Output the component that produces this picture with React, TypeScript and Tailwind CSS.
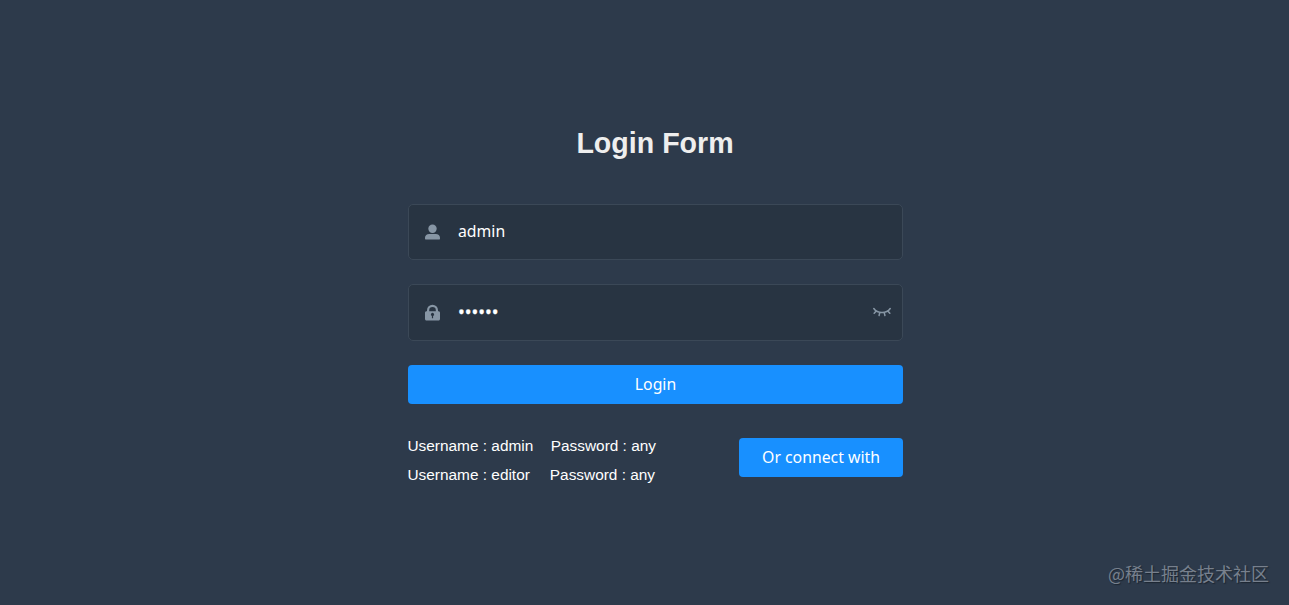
import { useState } from "react";
import clsx from "clsx";

const accounts = [
  { username: "admin", password: "any", gap: "gap-[17.5px]" },
  { username: "editor", password: "any", gap: "gap-[20px]" },
];

function UserIcon() {
  return (
    <svg width="16" height="16" viewBox="0 0 16 16" fill="currentColor">
      <circle cx="7.5" cy="4.8" r="4.2" />
      <path d="M4.2 10h6.6c2.4 0 4.2 1.6 4.2 3.8v.6c0 .8-.6 1.2-1.4 1.2H1.4c-.8 0-1.4-.4-1.4-1.2v-.6C0 11.6 1.8 10 4.2 10z" />
    </svg>
  );
}

function LockIcon() {
  return (
    <svg width="16" height="17" viewBox="0 0 16 17" fill="currentColor">
      <path
        fillRule="evenodd"
        d="M2 7.3V6.2a5.5 5.5 0 0 1 11 0v1.1h.4c1 0 1.6.6 1.6 1.5V15c0 .9-.6 1.5-1.6 1.5H1.6C.6 16.5 0 15.9 0 15V8.8c0-.9.6-1.5 1.6-1.5zm2.2 0h6.6V6.2a3.3 3.3 0 0 0-6.6 0zM6.9 12v2.2h1.2V12a1.6 1.6 0 1 0-1.2 0z"
      />
    </svg>
  );
}

function EyeClosedIcon() {
  return (
    <svg
      width="18"
      height="11"
      viewBox="0 0 18 11"
      fill="none"
      stroke="currentColor"
      strokeWidth="1.5"
      strokeLinecap="round"
    >
      <path d="M.8 1.5C4.6 6.9 13.4 6.9 17.2 1.5M3.2 3.9l-2 2.4M6.8 5.4l-.7 3.1M11.2 5.4l.7 3.1M14.8 3.9l2 2.4" />
    </svg>
  );
}

export default function App() {
  const [username, setUsername] = useState("admin");
  const [password, setPassword] = useState("111111");
  const [visible, setVisible] = useState(false);

  return (
    <div className="relative flex h-[605px] w-full justify-center overflow-hidden bg-[#2d3a4b] pl-[22px] font-['Liberation_Sans',sans-serif]">
      <form className="w-[495px] pt-[127px]" onSubmit={(e) => e.preventDefault()}>
        <h3 className="mb-[44px] pr-px text-center text-[28.6px] leading-[33px] font-bold text-[#eee]">
          Login Form
        </h3>

        <div className="mb-6 flex h-14 items-center rounded-[5px] border border-[#3b4857] bg-[#283442] pr-[11px] pl-4 text-[#8796a5]">
          <UserIcon />
          <input
            className="ml-[17px] h-full min-w-0 flex-1 bg-transparent pb-[2px] font-['Noto_Sans',sans-serif] text-[15.8px] text-white outline-none"
            value={username}
            onChange={(e) => setUsername(e.target.value)}
          />
        </div>

        <div className="mb-6 flex h-[57px] items-center rounded-[5px] border border-[#3b4857] bg-[#283442] pr-[11px] pl-4 text-[#8796a5]">
          <LockIcon />
          <input
            className={clsx(
              "ml-[17px] h-full min-w-0 flex-1 bg-transparent font-['Noto_Sans',sans-serif] text-white outline-none",
              visible ? "pb-[2px] text-[15.8px]" : "pb-1 text-[18px] [-webkit-text-stroke:0.3px_white]"
            )}
            type={visible ? "text" : "password"}
            value={password}
            onChange={(e) => setPassword(e.target.value)}
          />
          <button type="button" aria-label="Toggle password" onClick={() => setVisible(!visible)}>
            <EyeClosedIcon />
          </button>
        </div>

        <button className="mb-[34px] block h-[39px] w-full rounded bg-[#1890ff] font-['Noto_Sans',sans-serif] text-[15.8px] text-white">
          Login
        </button>

        <div className="flex items-start justify-between">
          <div className="-mt-[7px] -ml-[0.5px] text-[15.4px] leading-[29px] text-white">
            {accounts.map((item) => (
              <div key={item.username} className={clsx("flex", item.gap)}>
                <span>Username : {item.username}</span>
                <span>Password : {item.password}</span>
              </div>
            ))}
          </div>
          <button
            type="button"
            className="h-[39px] w-[164px] rounded bg-[#1890ff] font-['Noto_Sans',sans-serif] text-[15.8px] text-white"
          >
            Or connect with
          </button>
        </div>
      </form>

      <span className="absolute right-5 bottom-[18px] font-['Noto_Sans_CJK_SC',sans-serif] text-[18px] leading-[27px] whitespace-nowrap text-[#77808d] [text-shadow:1px_1px_1px_#1c2530]">
        @稀土掘金技术社区
      </span>
    </div>
  );
}
